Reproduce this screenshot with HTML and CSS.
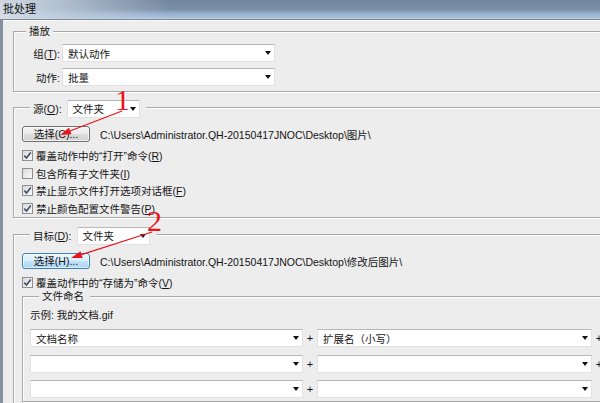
FILE: index.html
```html
<!DOCTYPE html>
<html lang="zh-CN">
<head>
<meta charset="utf-8">
<title>批处理</title>
<link rel="stylesheet" href="styles.css">
</head>
<body>
<div class="window">
  <div class="titlebar"><span class="title">批处理</span></div>
  <div class="client">
    <section class="group g-play">
      <div class="legend"><span>播放</span></div>
      <div class="play-grid">
        <span class="lbl">组(<u>T</u>):</span>
        <div class="select"><span>默认动作</span><i class="arrow"></i></div>
        <span class="lbl">动作:</span>
        <div class="select"><span>批量</span><i class="arrow"></i></div>
      </div>
    </section>

    <section class="group g-source">
      <div class="legend">
        <span class="lbl">源(<u>O</u>):</span>
        <div class="select small"><span>文件夹</span><i class="arrow"></i></div>
      </div>
      <div class="pick">
        <button class="btn" type="button">选择(C)...</button>
        <span class="path">C:\Users\Administrator.QH-20150417JNOC\Desktop\图片\</span>
      </div>
      <div class="checks">
        <div class="check"><span class="cb on"><svg viewBox="0 0 9 9" width="9" height="9"><path d="M1.3 4.6 L3.5 7 L7.8 1.4" /></svg></span><span>覆盖动作中的“打开”命令(<u>R</u>)</span></div>
        <div class="check"><span class="cb"></span><span>包含所有子文件夹(<u>I</u>)</span></div>
        <div class="check"><span class="cb on"><svg viewBox="0 0 9 9" width="9" height="9"><path d="M1.3 4.6 L3.5 7 L7.8 1.4" /></svg></span><span>禁止显示文件打开选项对话框(<u>F</u>)</span></div>
        <div class="check"><span class="cb on"><svg viewBox="0 0 9 9" width="9" height="9"><path d="M1.3 4.6 L3.5 7 L7.8 1.4" /></svg></span><span>禁止颜色配置文件警告(<u>P</u>)</span></div>
      </div>
    </section>

    <section class="group g-target">
      <div class="legend">
        <span class="lbl">目标(<u>D</u>):</span>
        <div class="select small"><span>文件夹</span><i class="arrow"></i></div>
      </div>
      <div class="pick">
        <button class="btn default" type="button">选择(H)...</button>
        <span class="path">C:\Users\Administrator.QH-20150417JNOC\Desktop\修改后图片\</span>
      </div>
      <div class="checks">
        <div class="check"><span class="cb on"><svg viewBox="0 0 9 9" width="9" height="9"><path d="M1.3 4.6 L3.5 7 L7.8 1.4" /></svg></span><span>覆盖动作中的“存储为”命令(<u>V</u>)</span></div>
      </div>

      <section class="group g-naming">
        <div class="legend"><span>文件命名</span></div>
        <div class="example">示例: 我的文档.gif</div>
        <div class="name-grid">
          <div class="select"><span>文档名称</span><i class="arrow"></i></div>
          <span class="plus">+</span>
          <div class="select"><span>扩展名（小写）</span><i class="arrow"></i></div>
          <span class="plus">+</span>

          <div class="select"><span></span><i class="arrow"></i></div>
          <span class="plus">+</span>
          <div class="select"><span></span><i class="arrow"></i></div>
          <span class="plus">+</span>

          <div class="select"><span></span><i class="arrow"></i></div>
          <span class="plus">+</span>
          <div class="select"><span></span><i class="arrow"></i></div>
          <span></span>
        </div>
      </section>
    </section>
  </div>

  <svg class="annot" width="600" height="403" viewBox="0 0 600 403">
    <text x="115" y="110" class="num">1</text>
    <line x1="122" y1="111" x2="70" y2="131" class="arr"/>
    <polygon points="60,135 69,127.7 71.5,134.3" class="head"/>
    <text x="147" y="231" class="num">2</text>
    <line x1="152" y1="232" x2="81.5" y2="254.6" class="arr"/>
    <polygon points="71,258 80.4,251.3 82.6,257.9" class="head"/>
  </svg>
</div>
</body>
</html>
```

FILE: styles.css
```css
* { box-sizing: border-box; }

html, body {
  margin: 0;
  padding: 0;
}

body {
  width: 600px;
  height: 403px;
  overflow: hidden;
  background: #ededed;
  font-family: "Liberation Sans", "Noto Sans CJK SC", sans-serif;
  font-size: 10.5px;
  color: #141414;
}

u {
  text-decoration-thickness: 1px;
  text-underline-offset: 1px;
}

.window {
  position: relative;
  width: 600px;
  height: 403px;
  overflow: hidden;
}

.titlebar {
  height: 20px;
  border-bottom: 1px solid #7f8891;
  background:
    linear-gradient(to right, rgba(214, 222, 231, 0.95) 0, rgba(196, 208, 222, 0.7) 70px, rgba(160, 180, 205, 0) 170px),
    linear-gradient(#72869d 0, #7b8fa7 50%, #93acca 68%, #a6bfdb 92%, #c3d3e3 100%);
  padding-left: 3px;
  line-height: 19px;
}

.title {
  font-size: 11px;
  color: #101010;
}

.client {
  height: 383px;
  border-left: 3px solid #83919f;
  padding-top: 11px;
  box-shadow: inset 0 1px 0 #fafafa;
}

.group {
  border: 1px solid #a9a9a9;
  box-shadow: inset 1px 1px 0 #fff, 1px 1px 0 #fff;
  margin: 0 -40px 0 10px;
}

.legend {
  display: flex;
  align-items: center;
  gap: 5px;
  width: max-content;
  margin: -8px 0 0 12px;
  padding: 0 3px;
  background: #ededed;
  line-height: 14px;
}

.g-source .legend,
.g-target .legend {
  margin-left: 16px;
  padding-right: 6px;
}

.select {
  height: 18px;
  background: #fff;
  border: 1px solid #e2e2e2;
  border-top-color: #b8b8b8;
  display: flex;
  align-items: center;
  justify-content: space-between;
  padding: 0 3px 0 5px;
  white-space: nowrap;
}

.select.small {
  width: 73px;
}

.arrow {
  width: 0;
  height: 0;
  border-left: 3.5px solid transparent;
  border-right: 3.5px solid transparent;
  border-top: 4px solid #111;
}

/* play */
.play-grid {
  display: grid;
  grid-template-columns: 46px 213px;
  column-gap: 2px;
  row-gap: 6px;
  align-items: center;
  margin-top: 6px;
  padding-bottom: 5px;
}

.lbl {
  white-space: nowrap;
}

.play-grid .lbl {
  text-align: right;
}

/* source & target */
.g-source {
  margin-top: 15px;
}

.g-target {
  margin-top: 16px;
  padding-bottom: 20px;
}

.pick {
  display: flex;
  align-items: center;
  gap: 10px;
  margin-top: 8px;
  padding-left: 8px;
}

.btn {
  width: 68px;
  height: 16px;
  padding: 0;
  font: inherit;
  line-height: 14px;
  color: #141414;
  border: 1px solid #707070;
  border-radius: 3px;
  background: linear-gradient(#f3f3f3 0, #ececec 48%, #dedede 52%, #d0d0d0 100%);
  box-shadow: inset 0 0 0 1px rgba(255, 255, 255, 0.7);
}

.btn.default {
  border-color: #3c7fb1;
  background: linear-gradient(#e9f5fd 0, #d9eefb 48%, #c2e3f8 52%, #a9d6f3 100%);
  box-shadow: inset 0 0 0 1px rgba(255, 255, 255, 0.6);
}

.path {
  white-space: nowrap;
}

.checks {
  margin-top: 5px;
  padding-left: 8px;
}

.check {
  height: 17.5px;
  display: flex;
  align-items: center;
  gap: 3px;
  white-space: nowrap;
}

.cb {
  width: 11px;
  height: 11px;
  flex: none;
  border: 1px solid #8e8f8f;
  background: linear-gradient(135deg, #d9d9d9, #fbfbfb);
  display: flex;
  align-items: center;
  justify-content: center;
}

.cb svg path {
  fill: none;
  stroke: #3f4f6e;
  stroke-width: 1.6;
}

/* naming */
.g-naming {
  margin: 4.5px -40px 0 8px;
}

.example {
  margin-top: 4px;
  line-height: 16px;
  padding-left: 7px;
}

.name-grid {
  display: grid;
  grid-template-columns: 273px 14px 275px 14px;
  row-gap: 7.5px;
  align-items: center;
  margin-top: 6px;
  padding: 0 0 3px 7px;
}

.plus {
  text-align: center;
  font-size: 11px;
}

/* annotations */
.annot {
  position: absolute;
  left: 0;
  top: 0;
  pointer-events: none;
}

.annot .num {
  font-family: "Liberation Serif", serif;
  font-size: 30px;
  fill: #e8141b;
}

.annot .arr {
  stroke: #e8141b;
  stroke-width: 1.3;
}

.annot .head {
  fill: #e8141b;
}
```
